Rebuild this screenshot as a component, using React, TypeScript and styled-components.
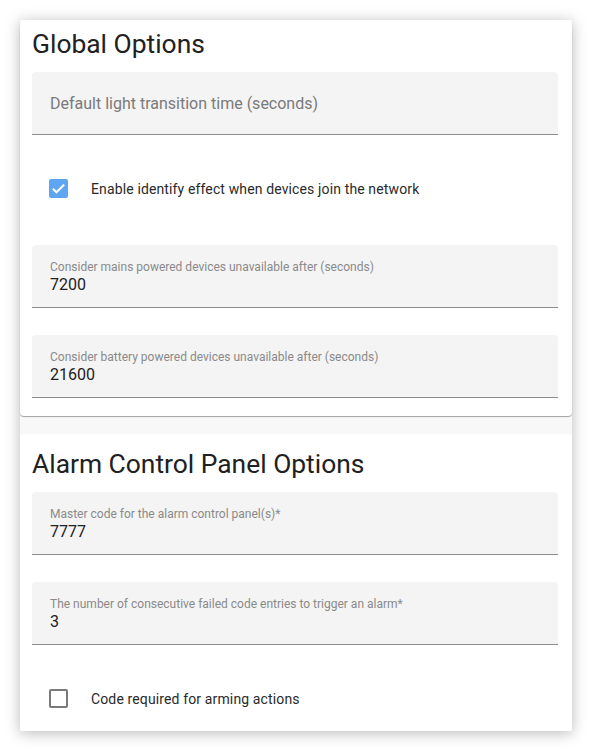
import styled, { createGlobalStyle } from "styled-components";

const GlobalStyle = createGlobalStyle`
  body {
    margin: 0;
    background: #ffffff;
    font-family: Roboto, "Noto Sans", sans-serif;
    -webkit-font-smoothing: antialiased;
  }
`;

/** 2枚のカードをまとめる外枠（影つき） */
const Panel = styled.div`
  width: 552px;
  margin: 20px;
  background: #f8f8f8;
  box-shadow: 0 2px 14px rgba(0, 0, 0, 0.28);
  display: flex;
  flex-direction: column;
  gap: 18px;
`;

const Card = styled.section<{ $top: number; $bottom: number; $raised?: boolean }>`
  background: #ffffff;
  border-radius: 4px;
  padding: ${({ $top }) => $top}px 14px ${({ $bottom }) => $bottom}px 12px;
  box-shadow: ${({ $raised }) => ($raised ? "0 1px 1px rgba(0, 0, 0, 0.35)" : "none")};
  display: flex;
  flex-direction: column;
`;

const Title = styled.h2`
  margin: 0 0 12px;
  font-size: 26.4px;
  line-height: 32px;
  font-weight: 400;
  color: #212121;
`;

const Field = styled.div<{ $gap?: number }>`
  height: 62px;
  box-sizing: content-box;
  margin-top: ${({ $gap }) => $gap ?? 0}px;
  background: #f4f4f4;
  border-radius: 4px 4px 0 0;
  border-bottom: 1px solid #8c8c8c;
  padding: 0 18px;
  display: flex;
  flex-direction: column;
  justify-content: center;
`;

const FilledField = styled(Field)`
  justify-content: flex-start;
  padding-top: 14px;
  height: 48px;
`;

const Placeholder = styled.span`
  font-size: 16px;
  line-height: 20px;
  color: #7a7a7a;
  padding-top: 2px;
`;

const FieldLabel = styled.span`
  font-size: 12px;
  line-height: 16px;
  color: #8a8a8a;
`;

const FieldValue = styled.span`
  font-size: 16px;
  line-height: 20px;
  color: #212121;
`;

const CheckRow = styled.label<{ $height: number; $padTop: number; $padBottom?: number }>`
  height: ${({ $height }) => $height}px;
  box-sizing: border-box;
  padding: ${({ $padTop }) => $padTop}px 0 ${({ $padBottom }) => $padBottom ?? 0}px 17px;
  display: flex;
  align-items: center;
  gap: 23px;
  font-size: 14px;
  letter-spacing: 0.13px;
  color: #2a2a2a;
`;

const Box = styled.span<{ $checked: boolean }>`
  width: 19px;
  height: 19px;
  box-sizing: border-box;
  border-radius: 2px;
  border: 2px solid ${({ $checked }) => ($checked ? "#5ea6f2" : "#7a7a7a")};
  background: ${({ $checked }) => ($checked ? "#5ea6f2" : "transparent")};
  display: flex;
  align-items: center;
  justify-content: center;
  flex-shrink: 0;
`;

const Checkbox = ({ checked }: { checked: boolean }) => (
  <Box $checked={checked}>
    {checked && (
      <svg width="17" height="17" viewBox="0 0 24 24">
        <path d="M3 12.5l5.8 5.6L21 5.8" fill="none" stroke="#ffffff" strokeWidth="3.4" />
      </svg>
    )}
  </Box>
);

const ValueField = ({ label, value, gap }: { label: string; value: string; gap?: number }) => (
  <FilledField $gap={gap}>
    <FieldLabel>{label}</FieldLabel>
    <FieldValue>{value}</FieldValue>
  </FilledField>
);

export default function App() {
  return (
    <>
      <GlobalStyle />
      <Panel>
        <Card $top={8} $bottom={18} $raised>
          <Title>Global Options</Title>
          <Field>
            <Placeholder>Default light transition time (seconds)</Placeholder>
          </Field>
          <CheckRow $height={110} $padTop={0} $padBottom={3}>
            <Checkbox checked />
            Enable identify effect when devices join the network
          </CheckRow>
          <ValueField label="Consider mains powered devices unavailable after (seconds)" value="7200" />
          <ValueField
            label="Consider battery powered devices unavailable after (seconds)"
            value="21600"
            gap={27}
          />
        </Card>
        <Card $top={14} $bottom={0}>
          <Title>Alarm Control Panel Options</Title>
          <ValueField label="Master code for the alarm control panel(s)*" value="7777" />
          <ValueField
            label="The number of consecutive failed code entries to trigger an alarm*"
            value="3"
            gap={27}
          />
          <CheckRow $height={86} $padTop={21}>
            <Checkbox checked={false} />
            Code required for arming actions
          </CheckRow>
        </Card>
      </Panel>
    </>
  );
}
